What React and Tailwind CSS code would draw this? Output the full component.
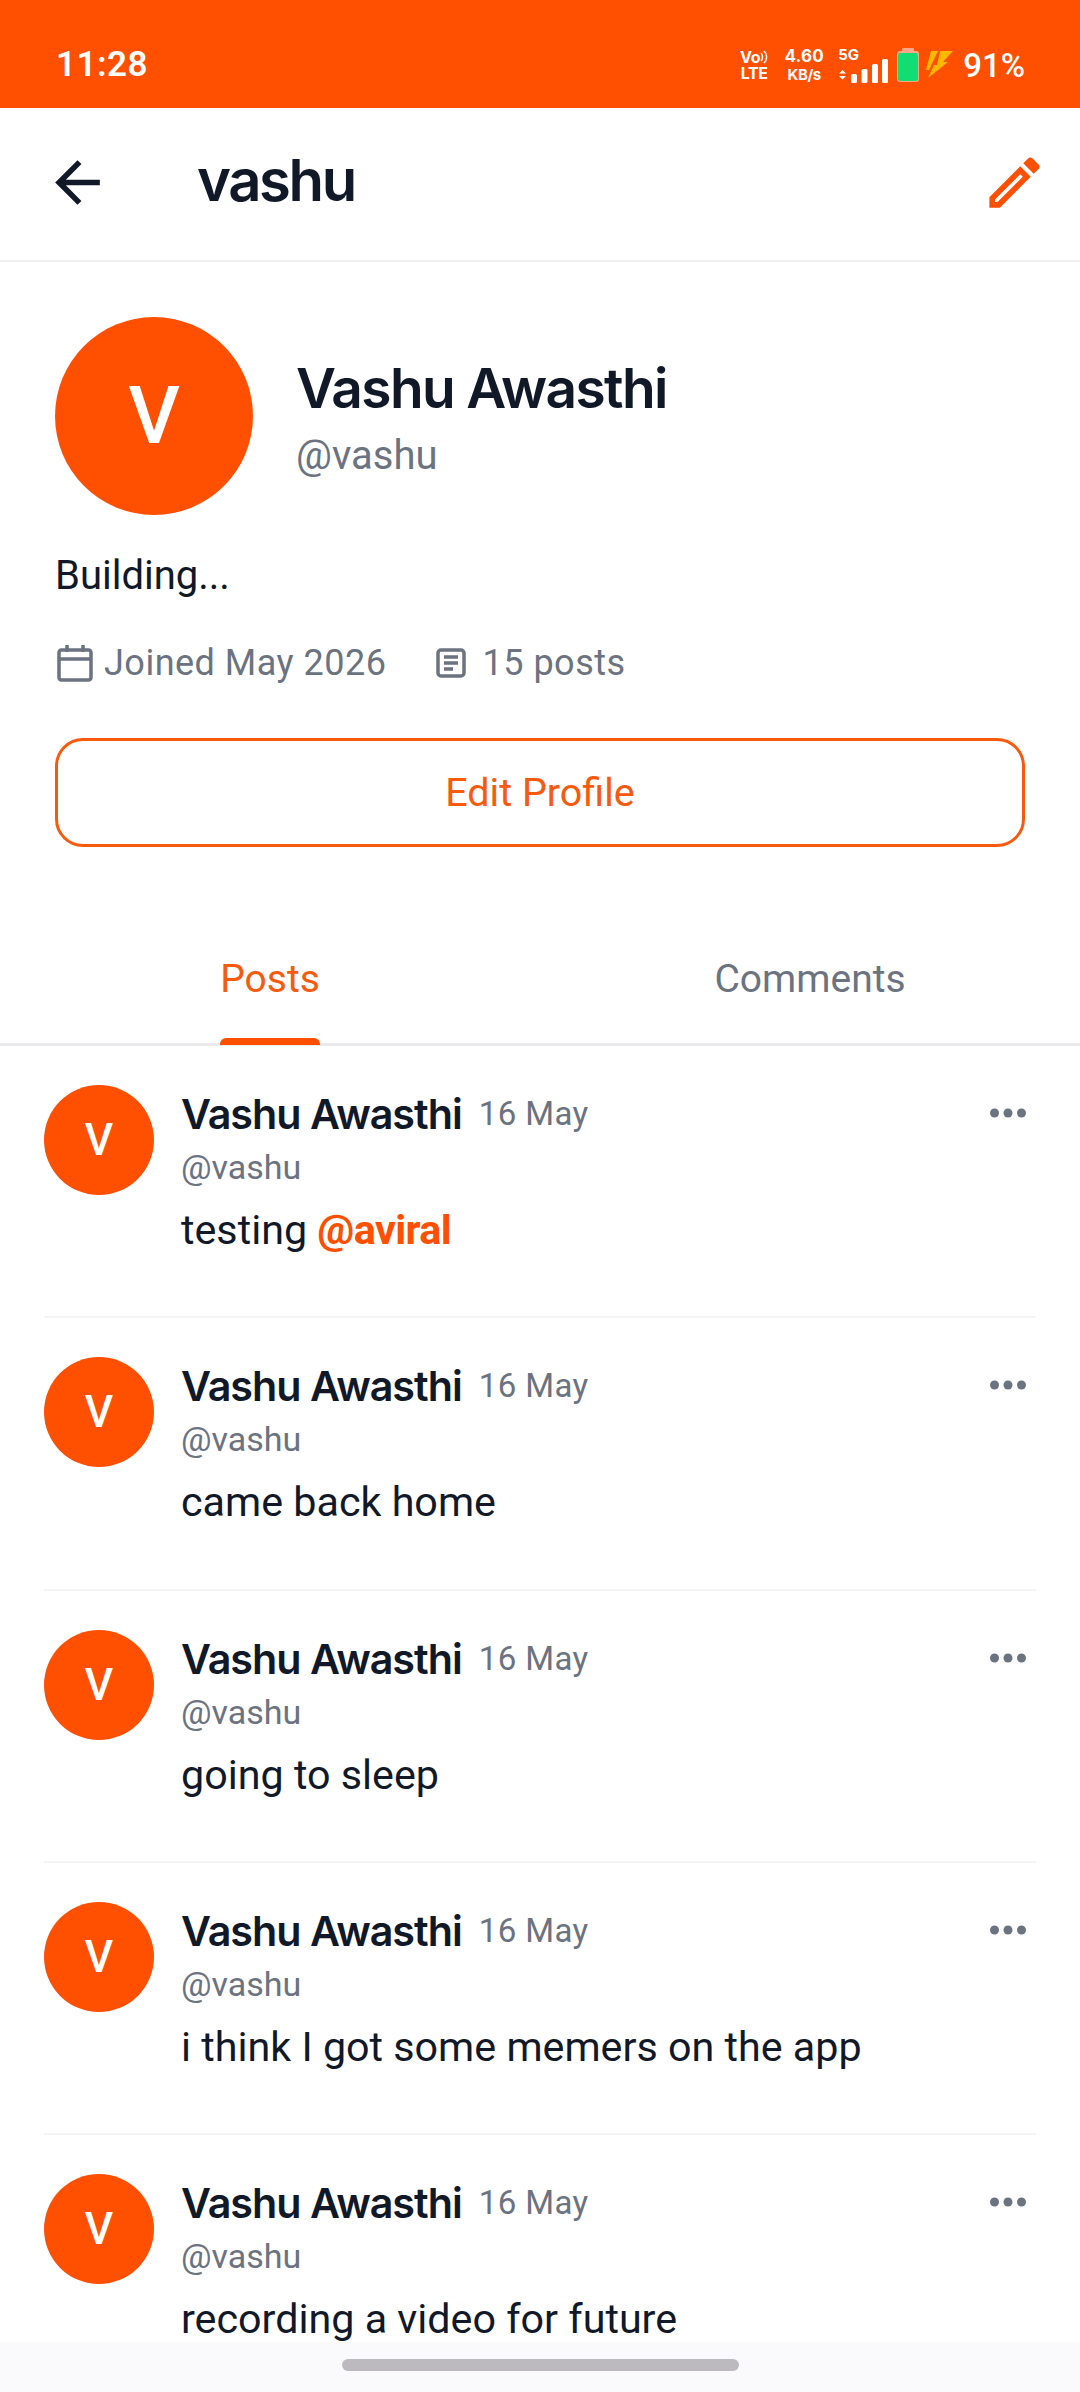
import React from "react";

const posts = [
  { body: "testing ", mention: "@aviral" },
  { body: "came back home" },
  { body: "going to sleep" },
  { body: "i think I got some memers on the app" },
  { body: "recording a video for future" },
];

function StatusIcons() {
  return (
    <div className="flex items-center font-['Inter',sans-serif] font-bold text-white">
      <div className="flex w-[30px] flex-col items-center text-[16px] leading-[16px] tracking-[-0.3px]">
        <div className="flex items-center">
          <span>Vo</span>
          <svg width="8" height="14" viewBox="0 0 8 14" fill="none" stroke="white" strokeWidth="1.5">
            <path d="M1 3c2 2 2 6 0 8M4 1c3.500 3 3.500 9 0 12" />
          </svg>
        </div>
        <span>LTE</span>
      </div>
      <div className="ml-[15px] flex w-[40px] flex-col items-center whitespace-nowrap">
        <span className="text-[17px] leading-[18px] tracking-[0.2px]">4.60</span>
        <span className="mt-[1px] text-[15px] leading-[17px] tracking-[-0.4px]">KB/s</span>
      </div>
      <div className="ml-[14px] flex flex-col">
        <span className="text-[15px] leading-[15px]">5G</span>
        <svg width="50" height="24" viewBox="0 0 50 24" fill="white" className="mt-[-3px]">
          <path d="M1 14.500l3.500-3.500 3.500 3.500zM1 17l3.500 3.500L8 17z" />
          <rect x="13" y="15" width="6" height="9" rx="1.500" />
          <rect x="23.500" y="10" width="6" height="14" rx="1.500" />
          <rect x="34" y="5" width="6" height="19" rx="1.500" />
          <rect x="44" y="0" width="6" height="24" rx="1.500" />
        </svg>
      </div>
      <svg width="22" height="34" viewBox="0 0 22 34" className="ml-[9px]">
        <rect x="5" y="0" width="12" height="4" rx="1" fill="#ffa58a" />
        <rect x="0" y="3" width="22" height="31" rx="3" fill="#ffa58a" />
        <rect x="1" y="5" width="20" height="28" rx="2.500" fill="#12dd73" />
      </svg>
      <svg width="28" height="28" viewBox="0 0 28 28" className="ml-[7px]" fill="#ffb800">
        <path d="M5 0h7L3 19H0z" />
        <path d="M14 0h13L17 11h5L2 27l6-13 3 0z" />
      </svg>
      <span className="ml-[9px] font-['Roboto',sans-serif] text-[33px] leading-none font-medium">91%</span>
    </div>
  );
}

function Avatar({ size, text }) {
  return (
    <div className={`flex shrink-0 items-center justify-center rounded-full bg-[#ff4f00] font-['Roboto',sans-serif] font-medium text-white ${size} ${text}`}>
      V
    </div>
  );
}

function Post({ post, last }) {
  return (
    <article className={`mx-[44px] flex h-[272.300px] shrink-0 border-[#f3f4f6] pt-[39px] ${last ? "" : "border-b-2"}`}>
      <Avatar size="h-[110px] w-[110px]" text="text-[44px]" />
      <div className="ml-[27px] flex min-w-0 flex-1 flex-col">
        <div className="mt-[1px] flex items-center">
          <span className="font-['Inter',sans-serif] text-[41.250px] leading-[56px] font-semibold tracking-[-1px] whitespace-nowrap text-[#111827]">Vashu Awasthi</span>
          <span className="ml-[17px] font-['Roboto',sans-serif] text-[33px] leading-[56px] tracking-[0.4px] text-[#6b7280]">16 May</span>
          <svg width="36" height="10" viewBox="0 0 36 10" fill="#6b7280" className="mt-[-2px] mr-[10px] ml-auto">
            <circle cx="4.500" cy="5" r="4.500" />
            <circle cx="18" cy="5" r="4.500" />
            <circle cx="31.500" cy="5" r="4.500" />
          </svg>
        </div>
        <div className="font-['Roboto',sans-serif] text-[34px] leading-[50px] text-[#6b7280]">@vashu</div>
        <p className="mt-[8px] font-['Roboto',sans-serif] text-[41.250px] leading-[60px] text-[#111827]">
          {post.body}
          {post.mention && <span className="font-bold tracking-[-0.6px] text-[#ff4f00]">{post.mention}</span>}
        </p>
      </div>
    </article>
  );
}

export default function App() {
  return (
    <div className="relative flex h-[2392px] w-[1080px] flex-col overflow-hidden bg-white">
      <div className="flex h-[108px] shrink-0 items-center justify-between bg-[#ff4f00] pt-[22px] pr-[55px] pl-[56px] text-white">
        <span className="font-['Roboto',sans-serif] text-[35px] font-semibold tracking-[0.5px]">11:28</span>
        <StatusIcons />
      </div>

      <header className="flex h-[154px] shrink-0 items-center border-b-2 border-[#f0f0f2] pr-[32px] pl-[44px]">
        <svg width="67" height="67" viewBox="0 0 24 24" fill="#111827" className="mt-[-4px]">
          <path d="M20 11H7.830l5.590-5.590L12 4l-8 8 8 8 1.410-1.410L7.830 13H20v-2z" />
        </svg>
        <h1 className="mt-[-8px] ml-[86px] font-['Inter',sans-serif] text-[58px] leading-none font-semibold tracking-[-2.400px] text-[#111827]">vashu</h1>
        <svg width="67" height="67" viewBox="0 0 24 24" fill="#ff4f00" className="mt-[-4px] ml-auto">
          <path d="M3 17.250V21h3.750L17.810 9.940l-3.750-3.750L3 17.250zM5.920 19H5v-.92l9.060-9.060.92.92L5.920 19zM20.710 5.630l-2.340-2.340c-.2-.2-.45-.29-.71-.29s-.51.1-.7.29l-1.830 1.830 3.750 3.750 1.830-1.830c.39-.39.39-1.020 0-1.410z" />
        </svg>
      </header>

      <section className="shrink-0 px-[55px] pt-[55px]">
        <div className="flex items-center">
          <Avatar size="h-[198px] w-[198px]" text="text-[80px]" />
          <div className="mt-[4px] ml-[43px] flex flex-col">
            <h2 className="font-['Inter',sans-serif] text-[55px] leading-[66px] font-semibold tracking-[-1.600px] text-[#111827]">Vashu Awasthi</h2>
            <span className="mt-[10px] font-['Roboto',sans-serif] text-[40px] leading-[50px] text-[#6b7280]">@vashu</span>
          </div>
        </div>
        <p className="mt-[33px] font-['Roboto',sans-serif] text-[40px] leading-[56px] text-[#111827]">Building...</p>
        <div className="mt-[31px] flex items-center font-['Roboto',sans-serif] text-[36px] leading-[56px] tracking-[0.5px] text-[#6b7280]">
          <svg width="36" height="38" viewBox="0 0 36 38" fill="none" stroke="#6b7280" strokeWidth="3.500" className="ml-[2px]">
            <rect x="2" y="6" width="32" height="30" rx="2.500" />
            <path d="M2 15h32M10 1v7M26 1v7" />
          </svg>
          <span className="ml-[11px]">Joined May 2026</span>
          <svg width="30" height="30" viewBox="0 0 30 30" fill="none" stroke="#6b7280" strokeWidth="3.500" className="ml-[49px]">
            <rect x="2" y="2" width="26" height="26" rx="3" />
            <path d="M8 9h14M8 15h14M8 21h9" />
          </svg>
          <span className="ml-[17px]">15 posts</span>
        </div>
        <button className="mt-[47px] flex h-[109px] w-full items-center justify-center rounded-[28px] border-[3px] border-[#f75a0c] font-['Roboto',sans-serif] text-[39.500px] text-[#f75a0c]">
          Edit Profile
        </button>
      </section>

      <nav className="relative mt-[73px] flex h-[126px] shrink-0 border-b-[3px] border-[#ebebee] font-['Roboto',sans-serif] text-[39px]">
        <div className="flex flex-1 items-center justify-center pb-[5px] text-[#f75a0c]">Posts</div>
        <div className="flex flex-1 items-center justify-center pb-[5px] text-[#6b7280]">Comments</div>
        <div className="absolute bottom-[-2px] left-[220px] h-[7px] w-[100px] rounded-t-[6px] bg-[#ff4f00]" />
      </nav>

      <main className="flex flex-col">
        {posts.map((post, i) => (
          <Post key={post.body} post={post} last={i === posts.length - 1} />
        ))}
      </main>

      <div className="absolute right-0 bottom-0 left-0 flex h-[50px] justify-center bg-[#faf9fc] pt-[17px]">
        <div className="h-[12px] w-[397px] rounded-full bg-[#bcbabf]" />
      </div>
    </div>
  );
}
